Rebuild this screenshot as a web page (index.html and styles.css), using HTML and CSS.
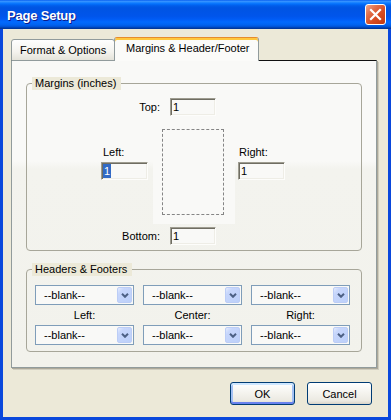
FILE: index.html
```html
<!DOCTYPE html>
<html lang="en">
<head>
    <meta charset="UTF-8">
    <meta name="viewport" content="width=device-width, initial-scale=1.0">
    <title>Page Setup</title>
    <link rel="stylesheet" href="styles.css">
</head>

<body>
    <div class="window">
        <div class="titlebar">
            <span class="title">Page Setup</span>
            <button class="close-btn" aria-label="Close">
                <svg width="19" height="19" viewBox="0 0 19 19">
                    <path d="M5 5 L14 14 M14 5 L5 14" stroke="#fff" stroke-width="2.2" stroke-linecap="square"/>
                </svg>
            </button>
        </div>

        <div class="client">
            <div class="tabs">
                <div class="tab">Format &amp; Options</div>
                <div class="tab active">Margins &amp; Header/Footer</div>
            </div>

            <div class="panel">
                <fieldset class="group margins">
                    <legend>Margins (inches)</legend>

                    <div class="center-row">
                        <label class="side-label">Top:</label>
                        <div class="field"><span>1</span></div>
                    </div>

                    <div class="middle-row">
                        <div class="side-field left">
                            <label>Left:</label>
                            <div class="field"><span class="selected">1</span></div>
                        </div>
                        <div class="page-wrap">
                            <div class="page"></div>
                        </div>
                        <div class="side-field right">
                            <label>Right:</label>
                            <div class="field"><span>1</span></div>
                        </div>
                    </div>

                    <div class="center-row bottom">
                        <label class="side-label">Bottom:</label>
                        <div class="field"><span>1</span></div>
                    </div>
                </fieldset>

                <fieldset class="group headers">
                    <legend>Headers &amp; Footers</legend>

                    <div class="combo-grid">
                        <div class="combo"><span>--blank--</span><span class="combo-btn"><svg width="8" height="5" viewBox="0 0 8 5"><polyline points="1,0.8 4,3.8 7,0.8" fill="none" stroke="#4d6185" stroke-width="2"/></svg></span></div>
                        <div class="combo"><span>--blank--</span><span class="combo-btn"><svg width="8" height="5" viewBox="0 0 8 5"><polyline points="1,0.8 4,3.8 7,0.8" fill="none" stroke="#4d6185" stroke-width="2"/></svg></span></div>
                        <div class="combo"><span>--blank--</span><span class="combo-btn"><svg width="8" height="5" viewBox="0 0 8 5"><polyline points="1,0.8 4,3.8 7,0.8" fill="none" stroke="#4d6185" stroke-width="2"/></svg></span></div>

                        <div class="combo-label">Left:</div>
                        <div class="combo-label">Center:</div>
                        <div class="combo-label">Right:</div>

                        <div class="combo"><span>--blank--</span><span class="combo-btn"><svg width="8" height="5" viewBox="0 0 8 5"><polyline points="1,0.8 4,3.8 7,0.8" fill="none" stroke="#4d6185" stroke-width="2"/></svg></span></div>
                        <div class="combo"><span>--blank--</span><span class="combo-btn"><svg width="8" height="5" viewBox="0 0 8 5"><polyline points="1,0.8 4,3.8 7,0.8" fill="none" stroke="#4d6185" stroke-width="2"/></svg></span></div>
                        <div class="combo"><span>--blank--</span><span class="combo-btn"><svg width="8" height="5" viewBox="0 0 8 5"><polyline points="1,0.8 4,3.8 7,0.8" fill="none" stroke="#4d6185" stroke-width="2"/></svg></span></div>
                    </div>
                </fieldset>
            </div>

            <div class="buttons">
                <button class="btn default">OK</button>
                <button class="btn">Cancel</button>
            </div>
        </div>
    </div>
</body>
</html>
```

FILE: styles.css
```css
/* General body styling */
body {
    margin: 0;
    padding: 0;
    font-family: "Liberation Sans", Arial, sans-serif;
    font-size: 11px;
    color: #000;
}

/* Window frame */
.window {
    width: 391px;
    height: 420px;
    display: flex;
    flex-direction: column;
    background-color: #0a48dc;
}

.titlebar {
    height: 29px;
    flex-shrink: 0;
    display: flex;
    align-items: center;
    justify-content: space-between;
    padding: 0 5px 0 7px;
    background: linear-gradient(to bottom,
        #0058ee 0%, #3a93ff 4%, #288eff 7%, #127dff 10%, #036ffc 14%,
        #0262ee 18%, #0057e5 24%, #0054e3 30%, #0055eb 56%, #005bf5 66%,
        #026afe 76%, #0062ef 86%, #0052d6 92%, #0040ab 96%, #003092 100%);
}

.title {
    color: #fff;
    font-weight: bold;
    font-size: 13px;
    letter-spacing: -0.2px;
    text-shadow: 1px 1px 0 #0c1a8a;
    padding-top: 1px;
}

.close-btn {
    width: 21px;
    height: 21px;
    padding: 0;
    display: flex;
    align-items: center;
    justify-content: center;
    border: 1px solid #fff;
    border-radius: 3px;
    background: linear-gradient(135deg, #f0a78c 0%, #e2704c 30%, #d74c23 60%, #c2390f 100%);
}

/* Dialog client area */
.client {
    flex: 1;
    display: flex;
    flex-direction: column;
    margin: 0 3px 3px 3px;
    padding: 8px 0 0 8px;
    background-color: #ece9d8;
}

/* Tabs */
.tabs {
    display: flex;
    align-items: flex-end;
    margin-bottom: -1px;
}

.tab {
    position: relative;
    z-index: 1;
    box-sizing: border-box;
    width: 104px;
    height: 22px;
    padding: 3px 0 0 8px;
    line-height: 14px;
    border: 1px solid #919b9c;
    border-radius: 3px 3px 0 0;
    background: linear-gradient(to bottom, #fefefe, #f4f3ee 60%, #e4e3da);
}

.tab.active {
    width: 145px;
    height: 24px;
    margin-left: -1px;
    padding: 3px 0 0 11px;
    border-bottom: none;
    border-top-color: #e68b2c;
    box-shadow: inset 0 2px 0 #ffc73c;
    background: #fbfbf9;
}

/* Tab panel */
.panel {
    box-sizing: border-box;
    width: 366px;
    height: 308px;
    padding: 0 14px;
    border: 1px solid #919b9c;
    border-top-color: #111;
    box-shadow: 1px 1px 0 #aca899, 2px 2px 0 #d0cdbf;
    background: linear-gradient(to bottom, #f9f9f7 0, #f9f9f7 100px, #f3f3ee 108px, #f2f2ec 100%);
}

/* Group boxes */
.group {
    margin: 16px 0 0 0;
    padding: 0;
    min-width: 0;
    border: 1px solid #a7a699;
    border-radius: 4px;
}

.group legend {
    margin-left: 5px;
    padding: 0 5px 0 3px;
    line-height: 13px;
    background-color: #ece9d8;
}

.margins {
    padding-bottom: 5px;
}

.headers {
    margin-top: 12px;
    padding-bottom: 6px;
}

/* Margin fields */
.center-row {
    display: flex;
    align-items: center;
    margin: 8px 0 0 74px;
}

.center-row.bottom {
    margin-top: 3px;
}

.side-label {
    width: 59px;
    margin-right: 10px;
    text-align: right;
}

.field {
    box-sizing: border-box;
    width: 46px;
    height: 18px;
    padding: 1px 0 0 1px;
    line-height: 14px;
    border: 1px solid;
    border-color: #9e9c90 #fdfdfb #fdfdfb #9e9c90;
    box-shadow: inset 1px 1px 0 #6f6d62, inset -1px -1px 0 #eeede6;
    background-color: #f9f9f7;
}

.field span {
    padding-left: 1px;
}

.field .selected {
    display: inline-block;
    padding: 0 1px;
    background-color: #316ac5;
    color: #fff;
}

.middle-row {
    display: flex;
    align-items: flex-start;
    margin: 13px 0 0 74px;
}

.side-field {
    display: flex;
    flex-direction: column;
    width: 47px;
    margin-top: 17px;
}

.side-field label {
    line-height: 13px;
    margin-bottom: 3px;
    padding-left: 2px;
}

.side-field .field {
    width: 47px;
}

.side-field.right {
    margin-left: 3px;
}

.side-field.right label {
    padding-left: 1px;
}

.page-wrap {
    margin-left: 5px;
    padding: 0 11px 9px 9px;
    background-color: #f9f9f7;
}

.page {
    box-sizing: border-box;
    width: 62px;
    height: 86px;
    border: 1px dashed #858585;
}

/* Header & footer combos */
.combo-grid {
    display: grid;
    grid-template-columns: repeat(3, 99px);
    grid-auto-rows: 20px;
    column-gap: 9px;
    margin: 9px 0 0 8px;
}

.combo {
    box-sizing: border-box;
    display: flex;
    align-items: center;
    justify-content: space-between;
    padding: 0 1px 0 8px;
    border: 1px solid #7f9db9;
    background-color: #f9f9f7;
}

.combo-btn {
    box-sizing: border-box;
    width: 15px;
    height: 16px;
    display: flex;
    align-items: center;
    justify-content: center;
    border: 1px solid #bccdf6;
    border-radius: 2px;
    background: linear-gradient(135deg, #e4ecfe 0%, #c7d6fb 25%, #bcd0fa 100%);
}

.combo-label {
    text-align: center;
    line-height: 20px;
}

/* Dialog buttons */
.buttons {
    display: flex;
    justify-content: flex-end;
    gap: 12px;
    margin-top: 14px;
    padding-right: 16px;
}

.btn {
    box-sizing: border-box;
    width: 65px;
    height: 23px;
    padding: 0;
    font-family: "Liberation Sans", Arial, sans-serif;
    font-size: 11px;
    color: #000;
    border: 1px solid #003c74;
    border-radius: 3px;
    background: linear-gradient(to bottom, #ffffff 0%, #f5f4ef 45%, #ebe9e1 85%, #d8d3c8 100%);
}

.btn.default {
    box-shadow: inset 0 2px 0 #cee7ff, inset 0 -2px 0 #6982ee, inset 2px 0 0 #a4c1f3, inset -2px 0 0 #a4c1f3;
}
```
